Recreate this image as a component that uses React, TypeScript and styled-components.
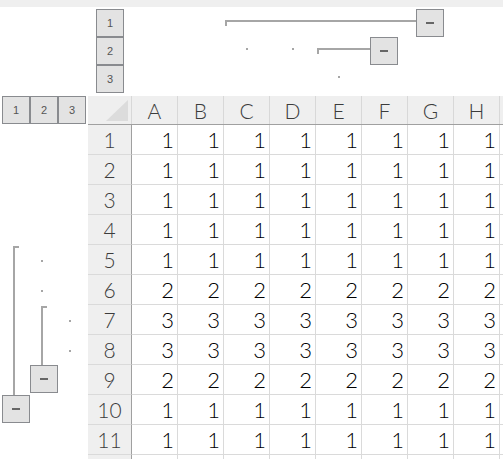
import React from "react";
import styled, { createGlobalStyle } from "styled-components";

const GlobalStyle = createGlobalStyle`
  *, *::before, *::after { box-sizing: border-box; }
  html, body { margin: 0; padding: 0; background: #ffffff; overflow: hidden; }
`;

const LINE = "#a6a6a6";

const Page = styled.div`
  width: 503px;
  height: 459px;
  overflow: hidden;
  display: flex;
  flex-direction: column;
  font-family: Lato, "Noto Sans", sans-serif;
`;

const TopBand = styled.div`
  flex: none;
  height: 7px;
  background: #efefef;
`;

const ColOutline = styled.div`
  flex: none;
  display: grid;
  grid-template-columns: 88px 44px repeat(9, 46px);
  grid-template-rows: repeat(3, 28px);
  margin-top: 2px;
  margin-bottom: 3px;
`;

const LevelButton = styled.div<{ $col: number; $row: number }>`
  grid-column: ${(p) => p.$col};
  grid-row: ${(p) => p.$row};
  justify-self: center;
  width: 28px;
  height: 28px;
  border: 1px solid #898b8f;
  background: #e3e3e3;
  display: flex;
  align-items: center;
  justify-content: center;
  font-family: "Liberation Sans", Arial, sans-serif;
  font-size: 11px;
  color: #555;
`;

const RowLevelButton = styled(LevelButton)`
  justify-self: start;
`;

const MinusButton = styled.div`
  flex: none;
  width: 28px;
  height: 28px;
  border: 1px solid #898b8f;
  background: #e3e3e3;
  display: flex;
  align-items: center;
  justify-content: center;
`;

const Minus = styled.span`
  width: 8px;
  height: 2px;
  background: #666666;
`;

const ColGroup = styled.div<{ $from: number; $to: number; $row: number }>`
  grid-column: ${(p) => p.$from} / ${(p) => p.$to};
  grid-row: ${(p) => p.$row};
  display: flex;
  align-items: flex-start;
  padding-right: 10px;
`;

const HLine = styled.div`
  position: relative;
  flex: 1;
  height: 2px;
  margin-left: 1px;
  margin-top: 11px;
  background: ${LINE};
  &::before {
    content: "";
    position: absolute;
    left: 0;
    top: 0;
    width: 2px;
    height: 6px;
    background: ${LINE};
  }
`;

const ColDot = styled.div<{ $col: number; $row: number }>`
  grid-column: ${(p) => p.$col};
  grid-row: ${(p) => p.$row};
  justify-self: center;
  align-self: start;
  width: 2px;
  height: 2px;
  margin-top: 11px;
  background: ${LINE};
`;

const Main = styled.div`
  flex: none;
  display: flex;
  align-items: flex-start;
`;

const RowOutline = styled.div`
  flex: none;
  width: 88px;
  padding-left: 2px;
  display: grid;
  grid-template-columns: repeat(3, 28px);
  grid-template-rows: 29px repeat(12, 30px);
`;

const RowGroup = styled.div<{ $col: number; $from: number; $to: number }>`
  grid-column: ${(p) => p.$col};
  grid-row: ${(p) => p.$from} / ${(p) => p.$to};
  display: flex;
  flex-direction: column;
  padding-bottom: 2px;
`;

const VLine = styled.div`
  position: relative;
  flex: 1;
  width: 2px;
  margin-left: 11px;
  margin-top: 1px;
  background: ${LINE};
  &::before {
    content: "";
    position: absolute;
    left: 0;
    top: 0;
    width: 6px;
    height: 2px;
    background: ${LINE};
  }
`;

const RowDot = styled.div<{ $col: number; $row: number }>`
  grid-column: ${(p) => p.$col};
  grid-row: ${(p) => p.$row};
  justify-self: start;
  align-self: start;
  width: 2px;
  height: 2px;
  margin-left: 11px;
  margin-top: 15px;
  background: ${LINE};
`;

const Sheet = styled.div`
  flex: none;
  display: flex;
  flex-direction: column;
`;

const HeaderRow = styled.div`
  display: flex;
  height: 29px;
  background: #efefef;
  border-bottom: 1px solid #a0a0a0;
`;

const Corner = styled.div`
  flex: none;
  width: 44px;
  display: flex;
  align-items: flex-end;
  justify-content: flex-end;
  padding: 0 3px 3px 0;
  border-right: 1px solid #d8d8d8;
`;

const ColHeader = styled.div`
  flex: none;
  width: 46px;
  border-right: 1px solid #d8d8d8;
  text-align: center;
  font-size: 21px;
  font-weight: 300;
  line-height: 26px;
  padding-top: 2px;
  color: #3c3c3c;
`;

const DataRow = styled.div`
  display: flex;
  height: 30px;
`;

const RowHeader = styled.div`
  flex: none;
  width: 44px;
  background: #efefef;
  border-right: 1px solid #a0a0a0;
  border-bottom: 1px solid #dadada;
  text-align: center;
  font-size: 21px;
  font-weight: 300;
  line-height: 30px;
  color: #3c3c3c;
`;

const Cell = styled.div`
  flex: none;
  width: 46px;
  border-right: 1px solid #dadada;
  border-bottom: 1px solid #dadada;
  text-align: right;
  padding-right: 3px;
  font-size: 22px;
  font-weight: 300;
  line-height: 30px;
  color: #000000;
`;

const FillerHeader = styled.div`
  flex: none;
  width: 46px;
  border-right: 1px solid #d8d8d8;
`;

const FillerCell = styled.div`
  flex: none;
  width: 46px;
  border-bottom: 1px solid #dadada;
  border-right: 1px solid #dadada;
`;

const COLS = ["A", "B", "C", "D", "E", "F", "G", "H"];
const ROW_VALUES: (number | null)[] = [1, 1, 1, 1, 1, 2, 3, 3, 2, 1, 1, null];

export default function App() {
  return (
    <Page>
      <GlobalStyle />
      <TopBand />
      <ColOutline>
        <LevelButton $col={2} $row={1}>1</LevelButton>
        <LevelButton $col={2} $row={2}>2</LevelButton>
        <LevelButton $col={2} $row={3}>3</LevelButton>
        <ColGroup $from={5} $to={10} $row={1}>
          <HLine />
          <MinusButton><Minus /></MinusButton>
        </ColGroup>
        <ColDot $col={5} $row={2} />
        <ColDot $col={6} $row={2} />
        <ColGroup $from={7} $to={9} $row={2}>
          <HLine />
          <MinusButton><Minus /></MinusButton>
        </ColGroup>
        <ColDot $col={7} $row={3} />
      </ColOutline>
      <Main>
        <RowOutline>
          <RowLevelButton $col={1} $row={1}>1</RowLevelButton>
          <RowLevelButton $col={2} $row={1}>2</RowLevelButton>
          <RowLevelButton $col={3} $row={1}>3</RowLevelButton>
          <RowGroup $col={1} $from={6} $to={12}>
            <VLine />
            <MinusButton><Minus /></MinusButton>
          </RowGroup>
          <RowDot $col={2} $row={6} />
          <RowDot $col={2} $row={7} />
          <RowGroup $col={2} $from={8} $to={11}>
            <VLine />
            <MinusButton><Minus /></MinusButton>
          </RowGroup>
          <RowDot $col={3} $row={8} />
          <RowDot $col={3} $row={9} />
        </RowOutline>
        <Sheet>
          <HeaderRow>
            <Corner>
              <svg width="22" height="21" viewBox="0 0 22 21">
                <polygon points="22,0 22,21 0,21" fill="#dcdcdc" />
              </svg>
            </Corner>
            {COLS.map((c) => (
              <ColHeader key={c}>{c}</ColHeader>
            ))}
            <FillerHeader />
          </HeaderRow>
          {ROW_VALUES.map((v, i) => (
            <DataRow key={i}>
              <RowHeader>{v === null ? "" : i + 1}</RowHeader>
              {COLS.map((c) => (
                <Cell key={c}>{v === null ? "" : v}</Cell>
              ))}
              <FillerCell />
            </DataRow>
          ))}
        </Sheet>
      </Main>
    </Page>
  );
}
